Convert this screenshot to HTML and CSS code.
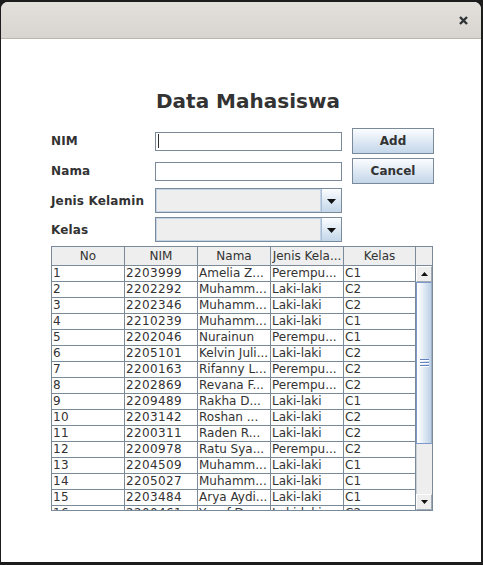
FILE: index.html
```html
<!DOCTYPE html>
<html>
<head>
<meta charset="utf-8">
<link rel="stylesheet" href="styles.css">
</head>
<body>
<div class="window">
  <div class="titlebar">
    <svg class="close" width="9" height="9" viewBox="0 0 9 9"><path d="M1 1L8 8M8 1L1 8" stroke="#2e3436" stroke-width="2.4" stroke-linecap="butt"/></svg>
  </div>
  <div class="content">
    <h1 class="title">Data Mahasiswa</h1>
    <div class="form">
      <label class="lbl">NIM</label>
      <div class="field"><span class="caret"></span></div>
      <button class="btn">Add</button>
      <label class="lbl">Nama</label>
      <div class="field"></div>
      <button class="btn">Cancel</button>
      <label class="lbl">Jenis Kelamin</label>
      <div class="combo"><span class="combo-val"></span><span class="combo-btn"><svg width="9" height="5" viewBox="0 0 9 5"><path d="M0 0H9L4.5 5Z" fill="#111"/></svg></span></div>
      <span></span>
      <label class="lbl">Kelas</label>
      <div class="combo"><span class="combo-val"></span><span class="combo-btn"><svg width="9" height="5" viewBox="0 0 9 5"><path d="M0 0H9L4.5 5Z" fill="#111"/></svg></span></div>
      <span></span>
    </div>
    <div class="pane">
      <div class="table">
        <div class="row head">
          <div class="c">No</div><div class="c">NIM</div><div class="c">Nama</div><div class="c">Jenis Kela...</div><div class="c">Kelas</div>
        </div>
        <div class="tbody">
          <div class="row"><div class="c num">1</div><div class="c num">2203999</div><div class="c">Amelia Z...</div><div class="c">Perempu...</div><div class="c">C1</div></div>
          <div class="row"><div class="c num">2</div><div class="c num">2202292</div><div class="c">Muhamm...</div><div class="c">Laki-laki</div><div class="c">C2</div></div>
          <div class="row"><div class="c num">3</div><div class="c num">2202346</div><div class="c">Muhamm...</div><div class="c">Laki-laki</div><div class="c">C2</div></div>
          <div class="row"><div class="c num">4</div><div class="c num">2210239</div><div class="c">Muhamm...</div><div class="c">Laki-laki</div><div class="c">C1</div></div>
          <div class="row"><div class="c num">5</div><div class="c num">2202046</div><div class="c">Nurainun</div><div class="c">Perempu...</div><div class="c">C1</div></div>
          <div class="row"><div class="c num">6</div><div class="c num">2205101</div><div class="c">Kelvin Juli...</div><div class="c">Laki-laki</div><div class="c">C2</div></div>
          <div class="row"><div class="c num">7</div><div class="c num">2200163</div><div class="c">Rifanny L...</div><div class="c">Perempu...</div><div class="c">C2</div></div>
          <div class="row"><div class="c num">8</div><div class="c num">2202869</div><div class="c">Revana F...</div><div class="c">Perempu...</div><div class="c">C2</div></div>
          <div class="row"><div class="c num">9</div><div class="c num">2209489</div><div class="c">Rakha D...</div><div class="c">Laki-laki</div><div class="c">C1</div></div>
          <div class="row"><div class="c num">10</div><div class="c num">2203142</div><div class="c">Roshan ...</div><div class="c">Laki-laki</div><div class="c">C2</div></div>
          <div class="row"><div class="c num">11</div><div class="c num">2200311</div><div class="c">Raden R...</div><div class="c">Laki-laki</div><div class="c">C2</div></div>
          <div class="row"><div class="c num">12</div><div class="c num">2200978</div><div class="c">Ratu Sya...</div><div class="c">Perempu...</div><div class="c">C2</div></div>
          <div class="row"><div class="c num">13</div><div class="c num">2204509</div><div class="c">Muhamm...</div><div class="c">Laki-laki</div><div class="c">C1</div></div>
          <div class="row"><div class="c num">14</div><div class="c num">2205027</div><div class="c">Muhamm...</div><div class="c">Laki-laki</div><div class="c">C1</div></div>
          <div class="row"><div class="c num">15</div><div class="c num">2203484</div><div class="c">Arya Aydi...</div><div class="c">Laki-laki</div><div class="c">C1</div></div>
          <div class="row"><div class="c num">16</div><div class="c num">2200461</div><div class="c">Yusuf D...</div><div class="c">Laki-laki</div><div class="c">C2</div></div>
        </div>
      </div>
      <div class="sbar">
        <div class="corner"></div>
        <div class="arrow"><svg width="7" height="4" viewBox="0 0 7 4"><path d="M0 4H7L3.5 0Z" fill="#111"/></svg></div>
        <div class="thumb"><span class="grip"></span><span class="grip"></span><span class="grip"></span></div>
        <div class="track"></div>
        <div class="arrow"><svg width="7" height="4" viewBox="0 0 7 4"><path d="M0 0H7L3.5 4Z" fill="#111"/></svg></div>
      </div>
    </div>
  </div>
</div>
</body>
</html>
```

FILE: styles.css
```css
html, body {
  margin: 0;
  padding: 0;
}
body {
  background: #1c1c1c;
  padding: 2px 0 0 1px;
  font-family: "DejaVu Sans", sans-serif;
  color: #333333;
}
.window {
  width: 480px;
  height: 560px;
  background: #ffffff;
  border-radius: 7px 7px 0 0;
  overflow: hidden;
  display: flex;
  flex-direction: column;
}
.titlebar {
  height: 36px;
  flex: none;
  background: linear-gradient(#e3e0dc, #d8d4cf);
  border-bottom: 1px solid #bbb5ad;
  display: flex;
  align-items: center;
  justify-content: flex-end;
  padding-right: 13px;
}
.close {
  display: block;
}
.content {
  padding: 50px 0 0 50px;
}
.title {
  margin: 0 0 15px 0;
  padding-left: 105px;
  font-size: 20px;
  font-weight: bold;
  line-height: 24px;
  color: #333333;
}
.form {
  display: grid;
  grid-template-columns: 104px 187px 92px;
  grid-template-rows: 26px 26px 25px 25px;
  column-gap: 0;
  row-gap: 4px;
  align-items: center;
}
.lbl {
  font-size: 12px;
  font-weight: bold;
  color: #333333;
  white-space: nowrap;
  letter-spacing: 0.15px;
}
.field {
  height: 19px;
  box-sizing: border-box;
  border: 1px solid #7a8a99;
  background: #ffffff;
  display: flex;
  align-items: center;
  padding-left: 2px;
}
.caret {
  width: 1px;
  height: 14px;
  background: #333333;
}
.btn {
  justify-self: end;
  height: 26px;
  width: 82px;
  box-sizing: border-box;
  border: 1px solid #7a8a99;
  background: linear-gradient(#fbfdff, #e4edf6 40%, #c3d6e9);
  font-family: "DejaVu Sans", sans-serif;
  font-size: 12px;
  font-weight: bold;
  color: #333333;
  padding: 0;
}
.combo {
  height: 25px;
  box-sizing: border-box;
  border: 1px solid #7a8a99;
  background: #eeeeee;
  display: flex;
}
.combo-val {
  flex: 1;
  box-shadow: inset 0 0 0 1px #c3d4e6;
}
.combo-btn {
  width: 19px;
  border-left: 1px solid #a9bdd2;
  background: linear-gradient(#fbfdff, #e4edf6 40%, #c3d6e9);
  display: flex;
  align-items: center;
  justify-content: center;
}
.combo-btn svg {
  display: block;
  margin-top: 1px;
}
.pane {
  margin-top: 4px;
  width: 380px;
  border: 1px solid #7a8a99;
  display: flex;
}
.table {
  width: 364px;
}
.row {
  display: grid;
  grid-template-columns: 73px 73px 73px 73px 72px;
  height: 16px;
}
.c {
  box-sizing: border-box;
  border-right: 1px solid #7a8a99;
  border-bottom: 1px solid #7a8a99;
  font-size: 12px;
  line-height: 15px;
  padding-left: 1px;
  white-space: nowrap;
  overflow: hidden;
  color: #333333;
}
.num {
  letter-spacing: 0.37px;
}
.row.head {
  height: 19px;
}
.head .c {
  background: #eeeeee;
  text-align: center;
  line-height: 18px;
  padding-left: 0;
}
.tbody {
  height: 244px;
  overflow: hidden;
}
.sbar {
  width: 16px;
  display: flex;
  flex-direction: column;
}
.corner {
  height: 18px;
  background: #eeeeee;
  border-bottom: 1px solid #7a8a99;
}
.arrow {
  height: 16px;
  box-sizing: border-box;
  background: #eeeeee;
  border: 1px solid #a0aab5;
  border-top-color: #ffffff;
  border-left-color: #ffffff;
  display: flex;
  align-items: center;
  justify-content: center;
}
.arrow svg {
  display: block;
}
.thumb {
  height: 162px;
  box-sizing: border-box;
  border: 1px solid #7d98c9;
  border-right-color: #9fb2c8;
  background: linear-gradient(to right, #ffffff, #eef4fa 30%, #d9e5f1 60%, #bcd0e6);
  display: flex;
  flex-direction: column;
  align-items: center;
  justify-content: center;
  gap: 1px;
}
.grip {
  width: 9px;
  height: 1px;
  background: #6382bf;
  border-bottom: 1px solid #ffffff;
}
.track {
  height: 50px;
  background: #eeeeee;
  border-left: 1px solid #c8ced6;
}
```
